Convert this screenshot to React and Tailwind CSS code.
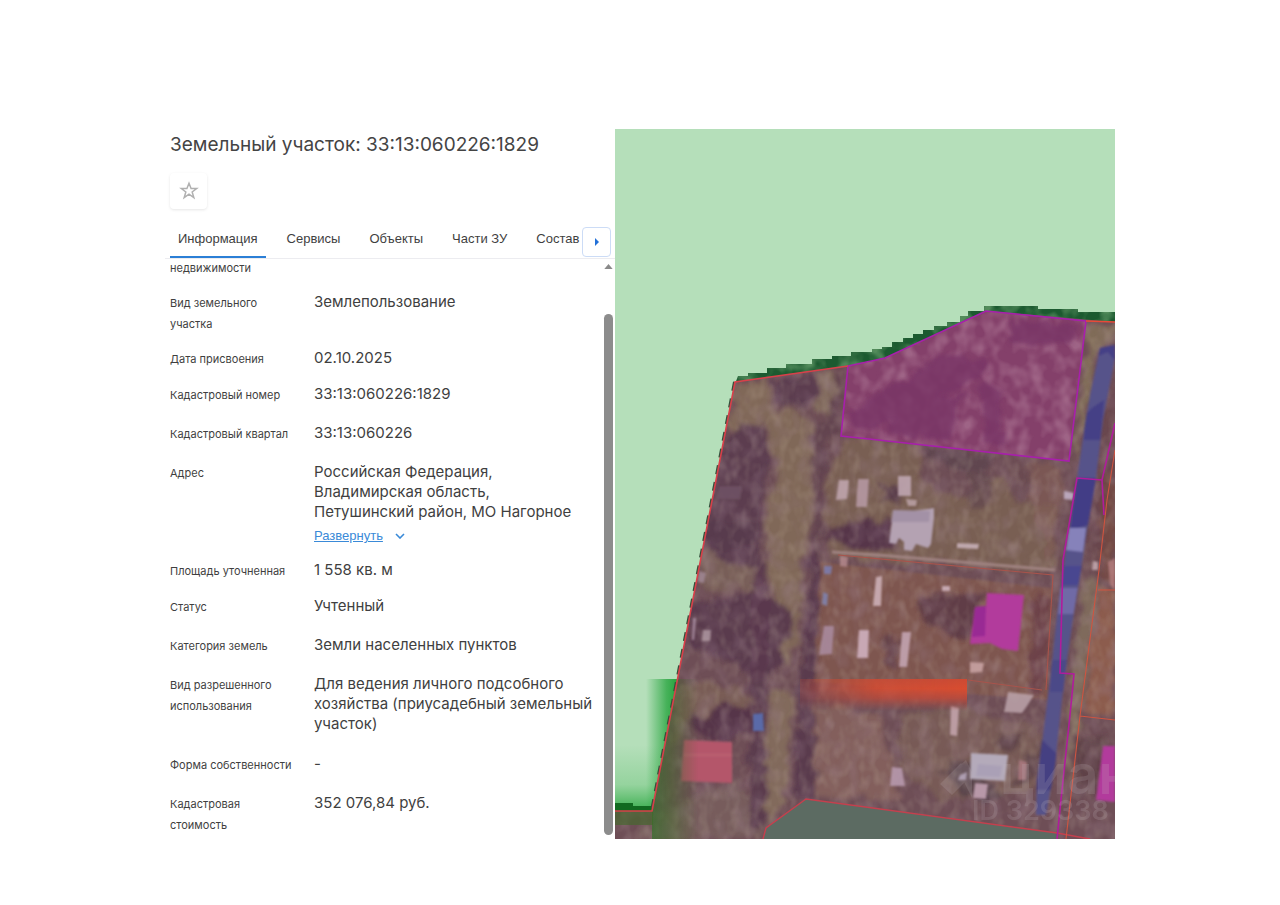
import { useState } from 'react';

const tabs = ['Информация', 'Сервисы', 'Объекты', 'Части ЗУ', 'Состав'];

const rows = [
  { label: 'недвижимости', value: '', gap: 'pb-[13px]' },
  { label: 'Вид земельного участка', value: 'Землепользование', gap: 'pb-[13px]' },
  { label: 'Дата присвоения', value: '02.10.2025', gap: 'pb-[14px]' },
  { label: 'Кадастровый номер', value: '33:13:060226:1829', gap: 'pb-[17px]' },
  { label: 'Кадастровый квартал', value: '33:13:060226', gap: 'pb-[17px]' },
  { label: 'Адрес', value: 'Российская Федерация, Владимирская область, Петушинский район, МО Нагорное', gap: 'pb-[14px]', expandable: true },
  { label: 'Площадь уточненная', value: '1 558 кв. м', gap: 'pb-[14px]' },
  { label: 'Статус', value: 'Учтенный', gap: 'pb-[17px]' },
  { label: 'Категория земель', value: 'Земли населенных пунктов', gap: 'pb-[17px]' },
  { label: 'Вид разрешенного использования', value: 'Для ведения личного подсобного хозяйства (приусадебный земельный участок)', gap: 'pb-5' },
  { label: 'Форма собственности', value: '-', gap: 'pb-[17px]' },
  { label: 'Кадастровая стоимость', value: '352 076,84 руб.', gap: 'pb-0' },
];

const AREA = '735,382 848,366 885,358 986,311 1115,322 1115,839 615,839 615,811 652,811';
const PARCEL = '848,366 885,358 986,311 1086,321 1069,461 841,436';
const ROAD = '1100,348 1115,345 1115,358 1103,420 1096,478 1087,530 1081,570 1074,612 1067,660 1062,700 1055,765 1046,815 1036,815 1037,780 1043,735 1050,680 1057,615 1065,555 1077,478 1085,425 1090,395';

// [points, fill, opacity]
const ridges = [
  ['735,384 768,380 772,405 792,412 812,420 814,440 810,480 812,545 800,560 802,610 796,640 788,665 770,650 776,600 768,570 766,500 780,465 764,420 742,440 728,425', '#806859', 1],
  ['822,370 838,372 836,410 845,430 815,408', '#826b5c', 0.9],
  ['845,438 920,446 925,480 960,500 1010,470 1015,505 1058,505 1050,575 935,562 830,560 826,520 830,470', '#795f52', 1],
  ['700,550 750,545 760,565 765,592 700,590', '#7b6258', 0.8],
  ['690,680 745,690 760,712 690,718 675,745 672,700', '#7a5e54', 0.9],
  ['772,690 794,690 786,800 768,830 766,770', '#826b5c', 1],
  ['815,705 880,715 900,800 812,798', '#85625c', 0.9],
  ['900,715 965,708 1040,730 1036,790 940,800 900,770', '#7b5f55', 0.8],
  ['1088,325 1115,325 1110,345 1096,352 1090,400 1072,475', '#806c59', 1],
  ['1100,585 1115,590 1115,715 1084,712', '#8c5c4e', 1],
  ['1084,580 1098,580 1084,700 1066,800 1070,690', '#7f6a5c', 1],
  ['655,812 735,780 750,800 766,828 755,839 640,839', '#785e5c', 0.9],
];

const shadows = [
  ['772,380 820,372 815,395 800,410 775,402', '#5c3c50', 1],
  ['740,425 764,425 770,450 762,500 762,560 758,570 720,560 700,525 712,470', '#5c3c50', 1],
  ['695,520 755,520 755,548 708,550 700,540', '#583a4e', 1],
  ['692,603 765,592 795,612 790,640 778,650 785,662 768,680 750,682 735,660 690,650', '#5a3a4e', 1],
  ['838,372 845,375 840,430 828,440 822,540 820,560 814,560 812,430 830,410', '#634450', 0.9],
  ['810,555 820,555 819,620 816,650 814,799 794,799 798,700 804,620', '#5a3a4e', 1],
  ['755,570 766,560 768,690 765,730 768,825 750,825 750,690', '#5a3a4e', 0.9],
  ['694,720 724,706 756,712 756,732 704,742', '#563648', 1],
  ['826,528 854,518 896,520 894,550 854,550 824,539', '#563648', 1],
  ['881,486 901,484 900,505 883,504', '#5a3c4c', 1],
  ['916,605 935,592 985,594 970,640 945,635', '#613c46', 1],
  ['925,446 995,455 985,475 955,470 925,458', '#5e4650', 0.9],
  ['968,470 990,475 988,510 970,508', '#644a50', 0.8],
  ['1018,460 1032,460 1028,505 1015,505', '#684850', 0.7],
  ['1032,462 1066,466 1050,560 1030,500', '#805c56', 0.7],
  ['1100,400 1115,380 1115,490 1105,530 1095,585 1088,565', '#68464c', 0.9],
  ['1100,500 1115,460 1115,585 1102,580', '#744840', 0.8],
  ['1080,738 1110,735 1100,795 1072,800', '#5c4046', 0.9],
  ['884,638 900,640 898,668 886,666', '#643f46', 1],
  ['1034,594 1052,598 1044,692 1028,690', '#6b4048', 0.9],
  ['942,768 975,760 980,778 1005,790 990,804 960,790', '#55404a', 0.9],
  ['1030,755 1045,740 1040,770 1010,790', '#5e444c', 0.8],
  ['1000,735 1025,735 1020,748 1000,748', '#5c424a', 0.8],
];

const buildings = [
  ['839,480 849,480 847,499 836,500', '#bfa4ac', 0.9],
  ['858,479 869,479 867,507 856,507', '#b598a2', 0.9],
  ['898,476 911,476 911,496 898,496', '#bfa5b0', 0.9],
  ['906,499 917,500 916,506 908,506', '#c0a8ac', 0.8],
  ['957,543 979,544 978,549 957,548', '#c8b0b8', 0.9],
  ['876,577 882,576 881,606 873,606', '#c9acb2', 0.95],
  ['942,586 950,586 950,591 942,591', '#cdb0ba', 0.9],
  ['859,630 869,630 868,658 857,658', '#c8a8b4', 1],
  ['902,632 911,632 907,667 899,667', '#c0a0ac', 0.95],
  ['824,626 834,626 832,654 819,655', '#a88a9c', 0.9],
  ['970,662 984,663 982,672 970,673', '#c8a2a2', 0.9],
  ['840,556 848,557 847,567 840,566', '#b88c90', 0.8],
  ['1008,692 1034,695 1027,706 1022,713 1004,712', '#b8a0a6', 0.9],
  ['951,706 959,708 957,736 950,735', '#bfa0a6', 0.95],
  ['892,767 902,768 905,786 890,786', '#b89aae', 0.9],
  ['960,775 967,772 966,780 958,780', '#b0a0b8', 0.9],
  ['699,571 706,573 704,583 698,582', '#a68ea0', 0.7],
  ['693,618 696,618 694,640 692,640', '#b49aac', 0.8],
  ['703,630 711,630 710,641 702,641', '#b09aa4', 0.8],
  ['719,486 742,486 740,499 716,499', '#6e5264', 0.9],
  ['1064,491 1074,493 1073,500 1064,499', '#c0aec4', 0.9],
  ['1093,561 1098,562 1098,570 1092,570', '#cbb0b8', 0.8],
  ['1108,562 1115,558 1115,590 1110,585', '#b88080', 0.8],
  ['824,566 832,566 831,574 824,574', '#7a80b8', 0.8],
  ['823,592 828,594 827,606 822,604', '#8088b8', 0.8],
  ['1019,760 1027,762 1026,780 1018,780', '#a8787e', 0.9],
];

// jagged treeline that steps along the northern border
const treeline = [
  [738, 376], [748, 373], [767, 368], [786, 364], [812, 359], [832, 356], [851, 352],
  [872, 349], [882, 347], [892, 342], [903, 338], [913, 334], [923, 330], [934, 326],
  [947, 322], [960, 316], [968, 311], [984, 306], [1038, 309], [1078, 312], [1115, 312],
];

function treelinePath() {
  let d = 'M735 384';
  treeline.forEach(([x, y], i) => {
    const next = treeline[i + 1];
    d += ` L${x} ${y}`;
    if (next) d += ` L${next[0]} ${y}`;
  });
  return `${d} L1115 325 L986 316 L885 362 L848 370 Z`;
}

function StarIcon() {
  return (
    <svg viewBox="0 0 24 24" className="h-5 w-5" fill="none" stroke="#b0b0b0" strokeWidth="1.8" aria-hidden="true">
      <path d="M12 2.8 14.5 9h6.7l-5.4 4.1 2 6.8-5.8-4-5.8 4 2-6.8L2.8 9h6.7z" />
    </svg>
  );
}

function ParcelMap() {
  return (
    <svg viewBox="615 129 500 710" className="block h-auto w-full" role="img" aria-label="Карта участка">
      <defs>
        <clipPath id="frame"><rect x="615" y="129" width="500" height="710" /></clipPath>
        <clipPath id="area"><polygon points={AREA} /></clipPath>
        <clipPath id="parcel"><polygon points={PARCEL} /></clipPath>
        <clipPath id="trees"><path d={treelinePath()} /></clipPath>
        <clipPath id="road"><polygon points={ROAD} /></clipPath>
        {/* blurred land patches get wobbly, organic outlines */}
        <filter id="patch" x="-5%" y="-5%" width="110%" height="110%">
          <feTurbulence type="fractalNoise" baseFrequency="0.06" numOctaves="3" seed="5" result="n" />
          <feDisplacementMap in="SourceGraphic" in2="n" scale="18" xChannelSelector="R" yChannelSelector="G" />
          <feGaussianBlur stdDeviation="2" />
        </filter>
        <filter id="edge"><feGaussianBlur stdDeviation="0.9" /></filter>
        <filter id="light" x="0" y="0" width="100%" height="100%">
          <feTurbulence type="fractalNoise" baseFrequency="0.1 0.07" numOctaves="2" seed="4" />
          <feColorMatrix values="0 0 0 0 0.58  0 0 0 0 0.48  0 0 0 0 0.38  2.4 0 0 0 -1" />
        </filter>
        <filter id="dark" x="0" y="0" width="100%" height="100%">
          <feTurbulence type="fractalNoise" baseFrequency="0.06 0.05" numOctaves="2" seed="11" />
          <feColorMatrix values="0 0 0 0 0.34  0 0 0 0 0.22  0 0 0 0 0.28  0 2.6 0 0 -1.15" />
        </filter>
        <filter id="leaf" x="0" y="0" width="100%" height="100%">
          <feTurbulence type="fractalNoise" baseFrequency="0.07" numOctaves="2" seed="8" />
          <feColorMatrix values="0 0 0 0 0.25  0 0 0 0 0.5  0 0 0 0 0.24  3 0 0 0 -1.3" />
        </filter>
        <filter id="rose" x="0" y="0" width="100%" height="100%">
          <feTurbulence type="fractalNoise" baseFrequency="0.07 0.06" numOctaves="2" seed="21" />
          <feColorMatrix values="0 0 0 0 0.6  0 0 0 0 0.35  0 0 0 0 0.46  2.4 0 0 0 -0.9" />
        </filter>
        <linearGradient id="greenX" x1="0" x2="1">
          <stop offset="0" stopColor="#22a33a" stopOpacity="0" />
          <stop offset="0.6" stopColor="#22a33a" stopOpacity="0.75" />
          <stop offset="1" stopColor="#1f9e35" />
        </linearGradient>
        <linearGradient id="greenY" x1="0" x2="0" y1="0" y2="1">
          <stop offset="0" stopColor="#36b04a" stopOpacity="0" />
          <stop offset="0.6" stopColor="#36b04a" stopOpacity="0.25" />
          <stop offset="1" stopColor="#22a33a" stopOpacity="0.85" />
        </linearGradient>
        <linearGradient id="olive" x1="0" x2="1">
          <stop offset="0" stopColor="#35702c" stopOpacity="0.9" />
          <stop offset="0.4" stopColor="#44682e" stopOpacity="0.7" />
          <stop offset="1" stopColor="#44682e" stopOpacity="0" />
        </linearGradient>
        <linearGradient id="flameX" x1="0" x2="1">
          <stop offset="0" stopColor="#fff" stopOpacity="0.2" />
          <stop offset="0.45" stopColor="#fff" stopOpacity="0.85" />
          <stop offset="1" stopColor="#fff" />
        </linearGradient>
        <linearGradient id="flameY" x1="0" x2="0" y1="0" y2="1">
          <stop offset="0" stopColor="#cc4a34" />
          <stop offset="0.3" stopColor="#d84c30" />
          <stop offset="0.6" stopColor="#c44a38" stopOpacity="0.85" />
          <stop offset="1" stopColor="#a84c40" stopOpacity="0" />
        </linearGradient>
        <mask id="flameMask"><rect x="800" y="679" width="168" height="32" fill="url(#flameX)" /></mask>
      </defs>

      <g clipPath="url(#frame)">
        <rect x="615" y="129" width="500" height="710" fill="#b5dfba" />
        <path d={treelinePath()} fill="#1c5a30" />
        <g clipPath="url(#trees)"><rect x="730" y="300" width="385" height="90" filter="url(#leaf)" opacity="0.5" /></g>
        <rect x="646" y="679" width="34" height="132" fill="url(#greenX)" />
        <rect x="615" y="745" width="45" height="66" fill="url(#greenY)" />
        <path d="M615 803h18v3h19v6h-37z" fill="#116a20" />
        <path d="M735 382 652 811" stroke="#35503c" strokeWidth="4" strokeDasharray="9 8" fill="none" />

        <g clipPath="url(#area)">
          <rect x="615" y="300" width="500" height="540" fill="#6e4e56" />
          <polygon points="820,562 1052,588 1048,700 812,682" fill="#7e5650" filter="url(#edge)" />
          <g filter="url(#patch)">
            {ridges.map(([points, fill, opacity]) => (
              <polygon key={points} points={points} fill={fill} opacity={opacity} />
            ))}
            {shadows.map(([points, fill, opacity]) => (
              <polygon key={points} points={points} fill={fill} opacity={opacity} />
            ))}
          </g>
          <rect x="615" y="300" width="500" height="540" filter="url(#light)" opacity="0.2" />
          <rect x="615" y="300" width="500" height="540" filter="url(#dark)" opacity="0.3" />

          <g filter="url(#edge)">
            <path d="M832 552 890 556 1055 570" stroke="#a08482" strokeWidth="3" fill="none" />
            {buildings.map(([points, fill, opacity]) => (
              <polygon key={points} points={points} fill={fill} opacity={opacity} />
            ))}
            <polygon points="893,514 934,508 934,518 931,544 928,548 916,544 912,551 904,550 904,542 899,538 896,544 889,543" fill="#b4a2b2" />
            <path d="M893 510 930 511 929 522 891 522z" fill="#a391a6" />
            <polygon points="971,740 1008,742 1005,768 970,766" fill="#b4aaba" transform="translate(0 13)" />
            <path d="M978 764 1002 766 1000 777 976 776z" fill="#aaa0b6" />
            <polygon points="975,783 988,784 986,799 973,798" fill="#b898a8" />
            <polygon points="684,740 732,742 732,783 681,781" fill="#b4566a" />
            <path d="M683 755h49" stroke="#be6476" strokeWidth="3" opacity="0.6" />
            <polygon points="753,714 763,713 764,731 753,731" fill="#5a6aa8" />
            <polygon points="987,593 1024,595 1018,651 1002,649 990,643 970,644 975,607 986,606" fill="#b23a9c" />
            <polygon points="975,607 986,606 985,636 972,637" fill="#992a94" />
            <polygon points="1103,746 1115,746 1115,802 1096,800" fill="#b23a9c" />
          </g>
          <g filter="url(#edge)">
            <polygon points={ROAD} fill="#57528a" />
            <g clipPath="url(#road)">
              <polygon points="1098,346 1116,344 1116,362 1108,352 1098,356" fill="#443f86" />
              <polygon points="1085,415 1092,408 1104,400 1100,440 1084,440" fill="#443f86" />
              <polygon points="1077,478 1098,478 1088,525 1070,530" fill="#433e86" />
              <polygon points="1068,528 1086,528 1083,552 1066,550" fill="#8682ba" />
              <polygon points="1064,566 1082,566 1078,585 1062,585" fill="#4a4690" />
              <polygon points="1060,588 1078,588 1074,614 1058,614" fill="#706aa6" />
              <polygon points="1052,660 1068,660 1064,692 1050,692" fill="#4c4888" />
              <polygon points="1042,740 1058,755 1052,790 1036,790" fill="#443f82" />
            </g>
          </g>

          <rect x="800" y="679" width="167" height="32" fill="url(#flameY)" mask="url(#flameMask)" />

          <polygon points="763,839 766,828 806,799 1057,833 1057,839" fill="#5c6b62" />
          <rect x="652" y="679" width="46" height="160" fill="url(#olive)" opacity="0.8" />
          <rect x="615" y="811" width="38" height="14" fill="#3f6a28" opacity="0.6" />
        </g>

        <g clipPath="url(#parcel)">
          <rect x="840" y="305" width="250" height="160" fill="#84406a" />
          <rect x="840" y="305" width="250" height="160" filter="url(#rose)" opacity="0.38" />
          <g filter="url(#patch)" fill="#783666" opacity="0.8">
            <polygon points="940,358 985,355 990,372 950,390 905,415 862,430 845,420 875,395" />
            <polygon points="900,400 965,395 950,440 890,435" />
            <polygon points="1005,318 1078,326 1072,345 1010,342" />
            <polygon points="980,380 1002,395 1000,445 985,440" />
          </g>
        </g>

        <polygon points={PARCEL} fill="none" stroke="#a81fac" strokeWidth="1.6" />
        <path d="M615 811H652L735 382 848 366" fill="none" stroke="#d8404a" strokeWidth="1.6" />
        <path d="M1086 321 1115 322" stroke="#e84a38" strokeWidth="1.6" />
        <path d="M763 839 766 828 806 799 1057 833 1090 839" fill="none" stroke="#c4404e" strokeWidth="1.4" />
        <g fill="none" stroke="#a8544c" strokeWidth="1.1">
          <path d="M838 555 1053 575 1046 690M968 680 1042 690" />
          <path d="M1115 450 1107 500 1099 570 1080 716 1066 839M1080 716 1115 720M1098 590H1115" stroke="#cf5440" />
        </g>
        <path
          d="M1115 423 1102 480 1104 515M1102 480 1077 478 1063 560 1060 673 1074 674 1070 715 1062 790 1057 839"
          fill="none"
          stroke="#b01c9c"
          strokeWidth="1.6"
        />

        <g fill="#c8bcc4" opacity="0.18" fontFamily="Inter, sans-serif" fontWeight="600">
          <path d="M940 784 961 763 972 775 952 795z" />
          <path d="M957 768 966 760 972 772 972 798z" />
          <text x="1000" y="794" fontSize="54">циан</text>
          <text x="972" y="820" fontSize="27">ID 329338</text>
        </g>
      </g>
    </svg>
  );
}

export default function App() {
  const [active, setActive] = useState(tabs[0]);

  return (
    <main className="bg-white px-[165px] pt-[129px] pb-16 font-['Inter',sans-serif] text-[#3f3f3f]">
      <div className="grid grid-cols-[9fr_10fr]">
        <section className="flex min-w-0 flex-col">
          <h1 className="pt-1 pl-[5px] text-[19px] leading-6 text-[#444]">
            Земельный участок: 33:13:060226:1829
          </h1>

          <button
            type="button"
            aria-label="В избранное"
            className="mt-4 ml-[5px] flex h-9 w-[37px] items-center justify-center rounded-sm bg-white shadow-[0_1px_3px_rgba(0,0,0,0.1)]"
          >
            <StarIcon />
          </button>

          <div className="mt-3 flex border-b border-[#ececf0] pl-[5px] font-['Liberation_Sans',Arial,sans-serif]">
            <div role="tablist" className="flex min-w-0 flex-1 gap-[13px]">
              {tabs.map(tab => (
                <button
                  key={tab}
                  type="button"
                  role="tab"
                  aria-selected={active === tab}
                  onClick={() => setActive(tab)}
                  className={`h-[37px] border-b-2 px-2 text-[13px] whitespace-nowrap ${active === tab ? 'border-[#2b7fd6]' : 'border-transparent'}`}
                >
                  {tab}
                </button>
              ))}
            </div>
            <button
              type="button"
              aria-label="Следующие вкладки"
              className="mt-[6px] mr-1 mb-[1px] flex h-[30px] w-[29px] shrink-0 items-center justify-center rounded-sm border border-[#ccdcf6] bg-white"
            >
              <svg viewBox="0 0 6 8" className="h-2 w-[6px]" aria-hidden="true"><path d="M1 0 5 4 1 8z" fill="#2270d8" /></svg>
            </button>
          </div>

          <div className="flex flex-1">
            <dl className="-mt-[2px] min-w-0 flex-1 pl-[5px]">
              {rows.map(row => (
                <div key={row.label} className={`flex ${row.gap}`}>
                  <dt className="w-36 shrink-0 pt-px pr-4 text-[11px] leading-[21px]">{row.label}</dt>
                  <dd className="max-w-[284px] flex-1 text-[15px] leading-5">
                    <p className={row.expandable ? 'max-w-[272px]' : ''}>
                      {row.value}
                    </p>
                    {row.expandable && (
                      <a href="#address" className="mt-1 flex items-center gap-3 font-['Liberation_Sans',Arial,sans-serif] text-[13px] leading-5 text-[#3a8ad8]">
                        <span className="underline">Развернуть</span>
                        <svg viewBox="0 0 10 6" className="h-[6px] w-[10px]" fill="none" stroke="#3a8ad8" strokeWidth="1.6" aria-hidden="true">
                          <path d="M1 1 5 5 9 1" />
                        </svg>
                      </a>
                    )}
                  </dd>
                </div>
              ))}
            </dl>
            <div className="mr-[2px] flex w-[9px] shrink-0 flex-col items-center pt-[5px] pb-1" aria-hidden="true">
              <svg viewBox="0 0 10 6" className="h-[5px] w-[9px]"><path d="M0 6 5 0 10 6z" fill="#8a8a8a" /></svg>
              <div className="mt-[45px] w-full flex-1 rounded-full bg-[#8c8c8c]" />
            </div>
          </div>
        </section>

        <ParcelMap />
      </div>
    </main>
  );
}
